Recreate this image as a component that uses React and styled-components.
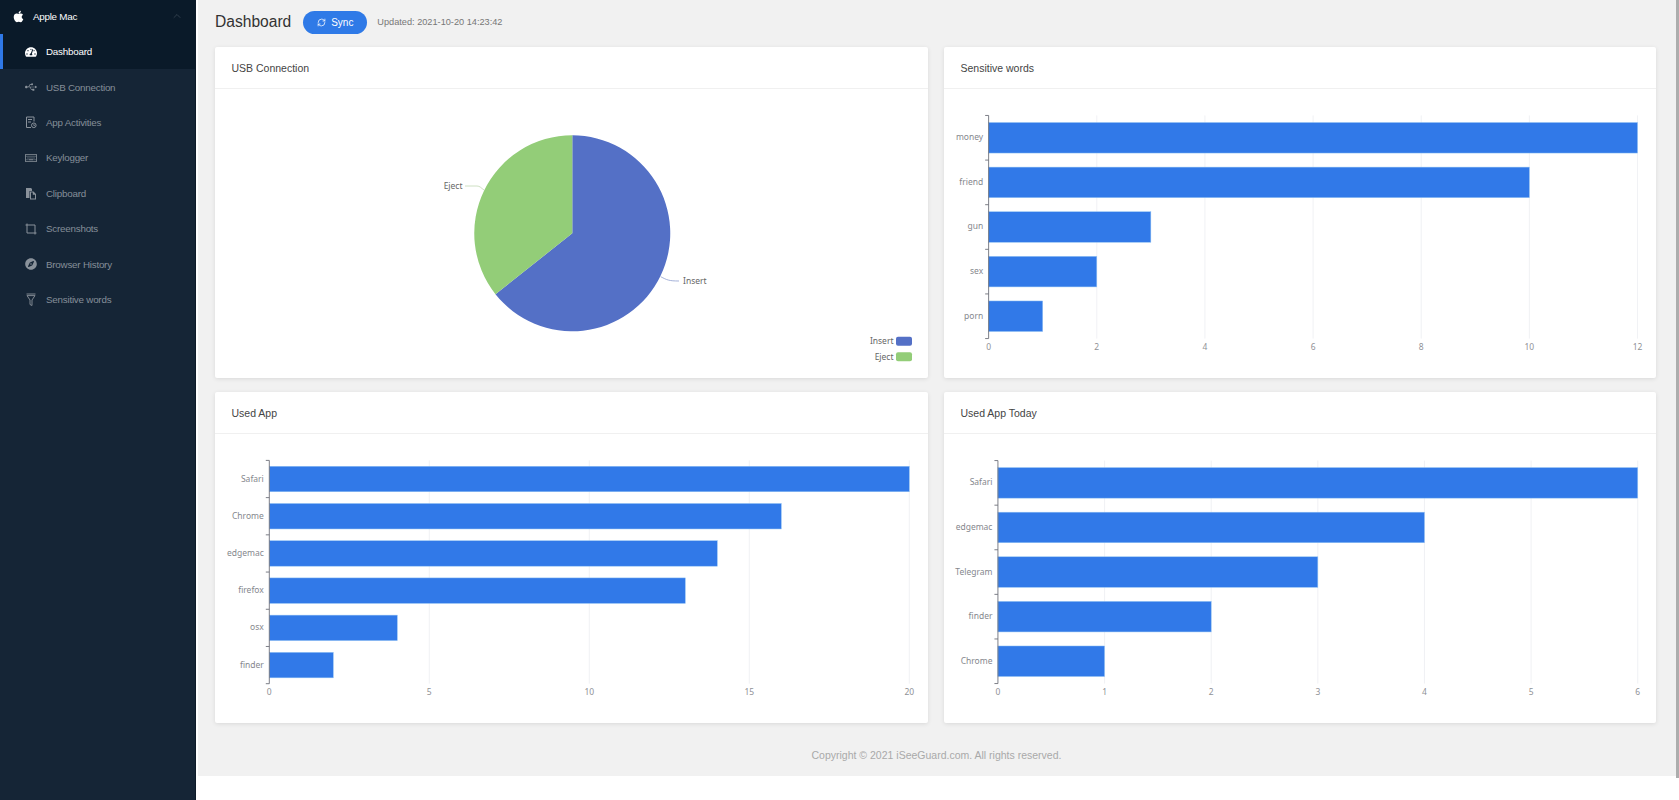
import React from 'react';
import styled, { createGlobalStyle } from 'styled-components';
import { FaApple, FaTachometerAlt, FaUsb, FaRegKeyboard, FaCompass } from 'react-icons/fa';
import { RefreshCw, ChevronUp } from 'lucide-react';

const Global = createGlobalStyle`
  html, body { margin: 0; padding: 0; background: #fff; height: 100%; overflow: hidden; }
  body { font-family: "Liberation Sans", Arial, sans-serif; }
  * { box-sizing: border-box; }
`;

const Shell = styled.div`
  position: relative;
  display: flex;
  width: 1679px;
  height: 800px;
  overflow: hidden;
  background: #fff;
`;
const Sidebar = styled.aside`
  flex: 0 0 196px;
  background: #152536;
  border-right: 1px solid #0d1a28;
  display: flex;
  flex-direction: column;
`;
const Brand = styled.div`
  height: 34px;
  padding: 0 12px 2px 12px;
  background: #0a1a29;
  display: flex;
  align-items: center;
  color: #fff;
  font-size: 9.8px;
  letter-spacing: -0.25px;
  svg:first-child { font-size: 13px; margin-right: 8px; }
  svg:last-child { margin-left: auto; color: #56636f; }
`;
const Item = styled.div`
  height: 35.4px;
  display: flex;
  align-items: center;
  gap: 10px;
  padding-left: 25px;
  font-size: 9.8px;
  letter-spacing: -0.22px;
  color: ${p => (p.$active ? '#ffffff' : '#858f99')};
  background: ${p => (p.$active ? '#0a1a29' : 'transparent')};
  box-shadow: ${p => (p.$active ? 'inset 3px 0 0 #2f78e6' : 'none')};
`;
const IconSlot = styled.span`
  width: 11px;
  height: 14px;
  flex: none;
  display: flex;
  align-items: center;
  justify-content: center;
  color: ${p => (p.$active ? '#ffffff' : '#8a929b')};
  svg { flex: none; }
`;
const Main = styled.main`
  flex: 0 0 1480px;
  margin-left: 2px;
  align-self: flex-start;
  height: 776px;
  background: #f1f1f1;
  padding: 0 20px 0 17px;
  display: flex;
  flex-direction: column;
`;
const TopBar = styled.header`
  height: 47px;
  padding-bottom: 3px;
  display: flex;
  align-items: center;
`;
const Title = styled.h1`
  margin: 0 12px 0 0;
  font-size: 15.6px;
  font-weight: 400;
  color: #333;
`;
const SyncButton = styled.button`
  width: 64px;
  height: 23px;
  border: 0;
  border-radius: 12px;
  background: #2f7ae7;
  color: #fff;
  font: 400 10px "Liberation Sans", Arial, sans-serif;
  display: flex;
  align-items: center;
  justify-content: center;
  gap: 5px;
  padding: 0;
  margin-right: 10px;
`;
const Updated = styled.span`
  font-size: 9.2px;
  color: #777;
`;
const Grid = styled.section`
  display: grid;
  grid-template-columns: 713px 712px;
  grid-auto-rows: 331px;
  column-gap: 16px;
  row-gap: 14px;
`;
const Card = styled.article`
  background: #fff;
  border-radius: 2px;
  box-shadow: 0 1px 4px rgba(0, 0, 0, 0.1);
  overflow: hidden;
`;
const CardHead = styled.h2`
  margin: 0;
  height: 42px;
  padding: 0 16.5px;
  display: flex;
  align-items: center;
  font-size: 10.5px;
  font-weight: 400;
  color: #444;
  border-bottom: 1px solid #f0f0f0;
`;
const ChartSvg = styled.svg`
  display: block;
  width: 100%;
  height: 289px;
`;
const Footer = styled.footer`
  flex: 1;
  display: flex;
  align-items: center;
  justify-content: center;
  padding-top: 11px;
  font-size: 10.5px;
  color: #a9a9a9;
`;
const Scrollbar = styled.div`
  position: absolute;
  right: 0;
  top: 0;
  width: 3px;
  height: 778px;
  background: #adadad;
`;
const AxisText = styled.text`
  font: 400 8.5px "Noto Sans", sans-serif;
  fill: ${p => p.$fill || '#85878d'};
`;

const menu = [
  ['Dashboard', <FaTachometerAlt size={12} />],
  ['USB Connection', <FaUsb size={12} />],
  ['App Activities', (
    <svg width="12" height="13" viewBox="0 0 12 13" fill="none" stroke="currentColor" strokeWidth="1">
      <path d="M6 11.5H1.5V1h7.5v4.5" /><path d="M3 3.5h4M3 6h3" /><circle cx="8.8" cy="9.3" r="2.3" /><path d="M8.8 8.3v1.1h1" />
    </svg>
  )],
  ['Keylogger', <FaRegKeyboard size={12} />],
  ['Clipboard', (
    <svg width="12" height="13" viewBox="0 0 12 13" fill="currentColor">
      <path d="M1 1h5l1 1v2H4.5v7H1z" /><path d="M5 4.5h3.5l2.5 2.5v5.5H5zM6 5.5v6h4V7.7H7.8V5.5z" />
    </svg>
  )],
  ['Screenshots', (
    <svg width="12" height="12" viewBox="0 0 12 12" fill="none" stroke="currentColor" strokeWidth="1">
      <path d="M2 0.5V10H11.5M0.5 2H10V11.5" />
    </svg>
  )],
  ['Browser History', <FaCompass size={12} />],
  ['Sensitive words', (
    <svg width="10" height="13" viewBox="0 0 10 13" fill="none" stroke="currentColor" strokeWidth="0.9">
      <path d="M0.5 1h9M1 2.600h8L6 7v5.500L4 11.500V7z" />
    </svg>
  )],
];

const BarChart = ({ data, max, step, axisX, top, bottom, right }) => {
  const band = (bottom - top) / data.length;
  const unit = (right - axisX) / max;
  const ticks = [];
  for (let v = 0; v <= max; v += step) ticks.push(v);
  return (
    <ChartSvg viewBox="0 0 713 289">
      {ticks.slice(1).map(v => (
        <line key={v} x1={axisX + v * unit} x2={axisX + v * unit} y1={top} y2={bottom} stroke="#eceef1" strokeWidth="0.8" />
      ))}
      {data.map(([name, value], i) => {
        const h = band * 0.685;
        const y = top + band * i + (band - h) / 2;
        return (
          <g key={name}>
            <rect x={axisX} y={y} width={value * unit} height={h} fill="#3179e8" stroke="#93c3f3" strokeWidth="0.5" />
            <AxisText x={axisX - 5.5} y={top + band * i + band / 2 + 2.5} textAnchor="end">{name}</AxisText>
          </g>
        );
      })}
      <line x1={axisX} x2={axisX} y1={top} y2={bottom} stroke="#6e7079" strokeWidth="0.9" />
      {data.map((_, i) => (
        <line key={i} x1={axisX - 3.5} x2={axisX} y1={top + band * i} y2={top + band * i} stroke="#6e7079" strokeWidth="0.9" />
      ))}
      <line x1={axisX - 3.5} x2={axisX} y1={bottom} y2={bottom} stroke="#6e7079" strokeWidth="0.9" />
      {ticks.map(v => (
        <AxisText key={v} x={axisX + v * unit} y={bottom + 11} textAnchor="middle" $fill="#8f9196">{v}</AxisText>
      ))}
    </ChartSvg>
  );
};

const PieChart = () => {
  const cx = 357.3, cy = 144.3, r = 98;
  const ex = cx - 76.6 * (r / 97.7), ey = cy + 60.7 * (r / 97.7);
  return (
    <ChartSvg viewBox="0 0 713 289">
      <path d={`M${cx} ${cy}L${cx} ${cy - r}A${r} ${r} 0 1 1 ${ex} ${ey}Z`} fill="#5470c6" />
      <path d={`M${cx} ${cy}L${ex} ${ey}A${r} ${r} 0 0 1 ${cx} ${cy - r}Z`} fill="#93cd78" />
      <path d="M445.7 187.7C452 191 454 192 464 192" fill="none" stroke="#8e9ecf" strokeWidth="0.8" />
      <AxisText x="468" y="194.5" $fill="#666">Insert</AxisText>
      <path d="M250 97H262C265 97 266 99 269 101" fill="none" stroke="#c2d8b4" strokeWidth="0.8" />
      <AxisText x="247.500" y="100" textAnchor="end" $fill="#666">Eject</AxisText>
      <AxisText x="678.500" y="255" textAnchor="end" $fill="#666">Insert</AxisText>
      <rect x="681" y="247.7" width="16" height="9" rx="2" fill="#5470c6" />
      <AxisText x="678.500" y="270.5" textAnchor="end" $fill="#666">Eject</AxisText>
      <rect x="681" y="263.3" width="16" height="9" rx="2" fill="#93cd78" />
    </ChartSvg>
  );
};

export default function App() {
  return (
    <Shell>
      <Global />
      <Sidebar>
        <Brand><FaApple />Apple Mac<ChevronUp size={12} strokeWidth={1} /></Brand>
        {menu.map(([label, icon], i) => (
          <Item key={label} $active={i === 0}>
            <IconSlot $active={i === 0}>{icon}</IconSlot>
            {label}
          </Item>
        ))}
      </Sidebar>
      <Main>
        <TopBar>
          <Title>Dashboard</Title>
          <SyncButton><RefreshCw size={9} strokeWidth={2} />Sync</SyncButton>
          <Updated>Updated: 2021-10-20 14:23:42</Updated>
        </TopBar>
        <Grid>
          <Card>
            <CardHead>USB Connection</CardHead>
            <PieChart />
          </Card>
          <Card>
            <CardHead>Sensitive words</CardHead>
            <BarChart
              data={[['money', 12], ['friend', 10], ['gun', 3], ['sex', 2], ['porn', 1]]}
              max={12} step={2} axisX={44.7} top={26.3} bottom={249.7} right={694.5}
            />
          </Card>
          <Card>
            <CardHead>Used App</CardHead>
            <BarChart
              data={[['Safari', 20], ['Chrome', 16], ['edgemac', 14], ['firefox', 13], ['osx', 4], ['finder', 2]]}
              max={20} step={5} axisX={54.3} top={26.4} bottom={249.7} right={694.3}
            />
          </Card>
          <Card>
            <CardHead>Used App Today</CardHead>
            <BarChart
              data={[['Safari', 6], ['edgemac', 4], ['Telegram', 3], ['finder', 2], ['Chrome', 1]]}
              max={6} step={1} axisX={54} top={26.4} bottom={249.7} right={694.7}
            />
          </Card>
        </Grid>
        <Footer>Copyright © 2021 iSeeGuard.com. All rights reserved.</Footer>
      </Main>
      <Scrollbar />
    </Shell>
  );
}
